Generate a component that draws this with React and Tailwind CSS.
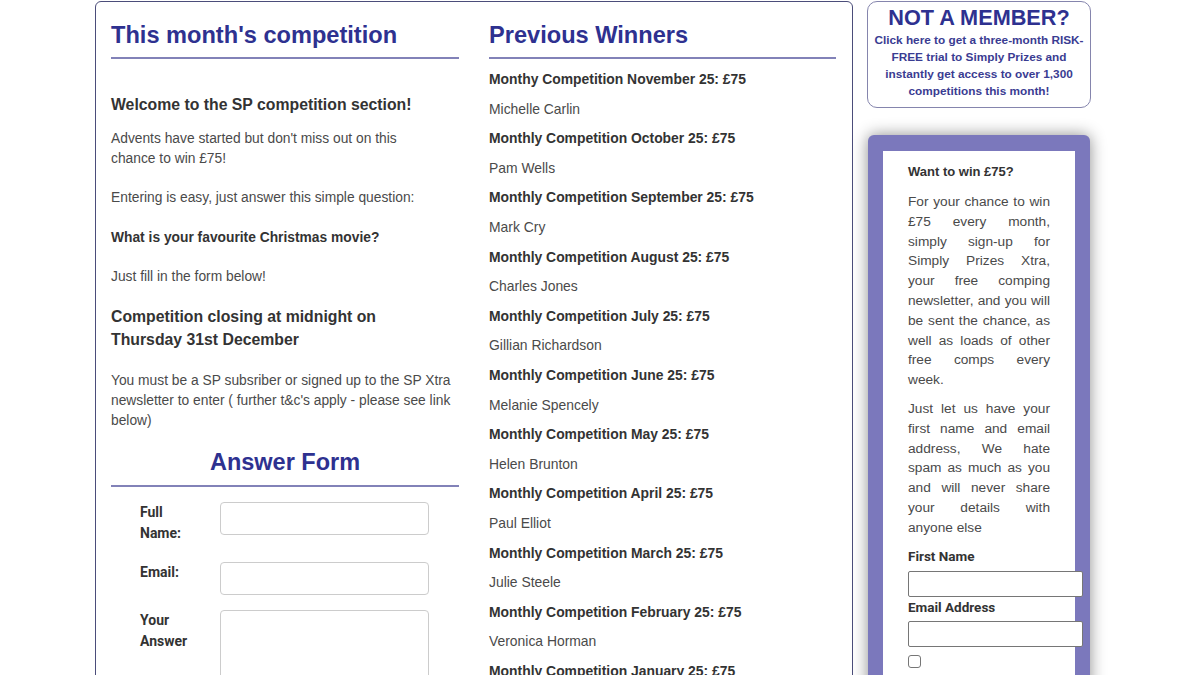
import React from "react";

const winners = [
  ["Monthy Competition November 25: £75", "Michelle Carlin"],
  ["Monthly Competition October 25: £75", "Pam Wells"],
  ["Monthly Competition September 25: £75", "Mark Cry"],
  ["Monthly Competition August 25: £75", "Charles Jones"],
  ["Monthly Competition July 25: £75", "Gillian Richardson"],
  ["Monthly Competition June 25: £75", "Melanie Spencely"],
  ["Monthly Competition May 25: £75", "Helen Brunton"],
  ["Monthly Competition April 25: £75", "Paul Elliot"],
  ["Monthly Competition March 25: £75", "Julie Steele"],
  ["Monthly Competition February 25: £75", "Veronica Horman"],
  ["Monthly Competition January 25: £75", "Sarah Thompson"],
];

const arial = { fontFamily: '"Liberation Sans", Arial, sans-serif' };
const roboto = { fontFamily: 'Roboto, "Liberation Sans", sans-serif' };

export default function App() {
  return (
    <div className="h-[675px] w-[1200px] overflow-hidden bg-white" style={arial}>
      <div className="flex items-start pt-[1px]">
        {/* Main box */}
        <div className="ml-[95px] w-[758px] h-[760px] border border-[#4b4d7a] rounded-[6px] pt-[19px] px-[15px] flex gap-[30px]">
          {/* Left column */}
          <div className="w-[348px] shrink-0">
            <h2 className="text-[23.6px] leading-[28px] font-bold text-[#2e3190] pb-[8px] border-b-2 border-[#8282b8]">
              This month's competition
            </h2>
            <p className="mt-[35px] text-[15.8px] leading-[22px] font-bold text-[#333]">
              Welcome to the SP competition section!
            </p>
            <p className="mt-[13px] text-[13.8px] leading-[20px] text-[#4a4a4a]">
              Advents have started but don't miss out on this
              <br />
              chance to win £75!
            </p>
            <p className="mt-[19px] text-[13.8px] leading-[20px] text-[#4a4a4a]">
              Entering is easy, just answer this simple question:
            </p>
            <p className="mt-[20px] text-[13.8px] leading-[20px] font-bold text-[#333]">
              What is your favourite Christmas movie?
            </p>
            <p className="mt-[19px] text-[13.8px] leading-[20px] text-[#4a4a4a]">
              Just fill in the form below!
            </p>
            <p className="mt-[18px] text-[15.8px] leading-[23px] font-bold text-[#333]">
              Competition closing at midnight on
              <br />
              Thursday 31st December
            </p>
            <p className="mt-[20px] text-[13.8px] leading-[20px] text-[#4a4a4a]">
              You must be a SP subsriber or signed up to the SP Xtra newsletter to enter ( further t&amp;c's apply - please see link below)
            </p>
            <h3 className="mt-[18px] text-[23.5px] leading-[26px] font-bold text-[#2e3190] text-center pb-[10px] border-b-2 border-[#8282b8]">
              Answer Form
            </h3>
            <div className="pl-[29px] text-[14px] text-[#333]" style={roboto}>
              <div className="mt-[15px] flex items-start">
                <label className="w-[62px] leading-[21px] font-bold">Full Name:</label>
                <input className="ml-[18px] w-[209px] h-[33px] border border-[#cccccc] rounded-[4px] bg-white" />
              </div>
              <div className="mt-[18px] flex items-start">
                <label className="w-[62px] leading-[21px] font-bold">Email:</label>
                <input className="ml-[18px] w-[209px] h-[33px] border border-[#cccccc] rounded-[4px] bg-white" />
              </div>
              <div className="mt-[15px] flex items-start">
                <label className="w-[62px] leading-[21px] font-bold">Your Answer</label>
                <textarea className="ml-[18px] w-[209px] h-[100px] border border-[#cccccc] rounded-[4px] bg-white resize-none" />
              </div>
            </div>
          </div>

          {/* Right column */}
          <div className="w-[347px] shrink-0">
            <h2 className="text-[23.6px] leading-[28px] font-bold text-[#2e3190] pb-[8px] border-b-2 border-[#8282b8]">
              Previous Winners
            </h2>
            <div className="mt-[11px] flex flex-col gap-[10px] text-[13.9px] leading-[19.6px]">
              {winners.map(([title, name]) => (
                <React.Fragment key={title}>
                  <p className="font-bold text-[#333]">{title}</p>
                  <p className="text-[#4a4a4a]">{name}</p>
                </React.Fragment>
              ))}
            </div>
          </div>
        </div>

        {/* Sidebar */}
        <div className="ml-[14px] w-[224px] shrink-0">
          <div className="border border-[#8585ad] rounded-[10px] pt-[4px] pb-[7px] px-[3px] text-center text-[#2e3190]">
            <div className="text-[21.7px] leading-[24px] font-bold">NOT A MEMBER?</div>
            <p className="mt-[2px] text-[11.8px] leading-[17px] font-bold text-[#3a3c92]">
              Click here to get a three-month RISK-FREE trial to Simply Prizes and instantly get access to over 1,300 competitions this month!
            </p>
          </div>

          <div className="mt-[27px] ml-[1px] w-[222px] h-[600px] bg-[#7b78bc] rounded-[6px] pt-[16px] px-[15px] shadow-[0_0_16px_rgba(0,0,0,0.45)]">
            <div className="w-[192px] h-[600px] bg-white pt-[12px] pl-[25px] pr-[25px]">
              <p className="text-[13px] leading-[18px] font-bold text-[#333]">Want to win £75?</p>
              <p className="mt-[11px] text-[13.7px] leading-[19.8px] text-[#4a4a4a] text-justify">
                For your chance to win £75 every month, simply sign-up for Simply Prizes Xtra, your free comping newsletter, and you will be sent the chance, as well as loads of other free comps every week.
              </p>
              <p className="mt-[9px] text-[13.7px] leading-[19.8px] text-[#4a4a4a] text-justify">
                Just let us have your first name and email address, We hate spam as much as you and will never share your details with anyone else
              </p>
              <div className="text-[13.5px] font-bold text-[#333]" style={roboto}>
                <div className="mt-[8px] leading-[20px]">First Name</div>
                <input className="mt-[5px] block w-[175px] h-[26px] border border-[#767676] rounded-[2px] bg-white" />
                <div className="mt-[0px] leading-[20px]">Email Address</div>
                <input className="mt-[4px] block w-[175px] h-[26px] border border-[#767676] rounded-[2px] bg-white" />
                <div className="mt-[8px] w-[13px] h-[13px] border border-[#767676] rounded-[3px] bg-white" />
              </div>
            </div>
          </div>
        </div>
      </div>
    </div>
  );
}
